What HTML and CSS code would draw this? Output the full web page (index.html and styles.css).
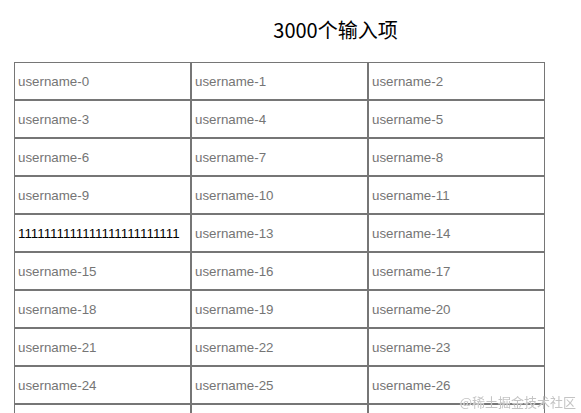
FILE: index.html
```html
<!DOCTYPE html>
<html lang="zh-CN">
<head>
<meta charset="utf-8">
<title>3000个输入项</title>
<link rel="stylesheet" href="styles.css">
</head>
<body>
<div class="page">
  <h1 class="title">3000个输入项</h1>
  <div class="grid">
    <input class="field" placeholder="username-0">
    <input class="field" placeholder="username-1">
    <input class="field" placeholder="username-2">
    <input class="field" placeholder="username-3">
    <input class="field" placeholder="username-4">
    <input class="field" placeholder="username-5">
    <input class="field" placeholder="username-6">
    <input class="field" placeholder="username-7">
    <input class="field" placeholder="username-8">
    <input class="field" placeholder="username-9">
    <input class="field" placeholder="username-10">
    <input class="field" placeholder="username-11">
    <input class="field" placeholder="username-12" value="1111111111111111111111111">
    <input class="field" placeholder="username-13">
    <input class="field" placeholder="username-14">
    <input class="field" placeholder="username-15">
    <input class="field" placeholder="username-16">
    <input class="field" placeholder="username-17">
    <input class="field" placeholder="username-18">
    <input class="field" placeholder="username-19">
    <input class="field" placeholder="username-20">
    <input class="field" placeholder="username-21">
    <input class="field" placeholder="username-22">
    <input class="field" placeholder="username-23">
    <input class="field" placeholder="username-24">
    <input class="field" placeholder="username-25">
    <input class="field" placeholder="username-26">
    <input class="field" placeholder="username-27">
    <input class="field" placeholder="username-28">
    <input class="field" placeholder="username-29">
  </div>
</div>
<div class="watermark">@稀土掘金技术社区</div>
</body>
</html>
```

FILE: styles.css
```css
html, body {
  margin: 0;
  padding: 0;
  background: #ffffff;
}

.page {
  padding: 0 14px;
}

.title {
  margin: 0;
  padding: 17px 0 0 90px;
  height: 62px;
  box-sizing: border-box;
  text-align: center;
  font-family: "Noto Sans CJK SC", "Noto Sans", sans-serif;
  font-weight: 400;
  font-size: 20px;
  line-height: 26px;
  color: #000000;
}

.grid {
  display: grid;
  grid-template-columns: repeat(3, 177px);
}

.field {
  box-sizing: border-box;
  width: 177px;
  height: 38px;
  margin: 0;
  padding: 0 3px;
  border: 1px solid #767676;
  border-radius: 0;
  outline: none;
  background: #ffffff;
  font-family: "Liberation Sans", Arial, sans-serif;
  font-size: 13.333px;
  color: #000000;
}

.field::placeholder {
  color: #757575;
  opacity: 1;
}

.watermark {
  position: fixed;
  right: 5px;
  bottom: 3px;
  font-family: "Noto Sans CJK SC", sans-serif;
  font-size: 13px;
  line-height: 17px;
  color: #c4c4c4;
  text-shadow: 0 0 1px #ffffff;
}
```
